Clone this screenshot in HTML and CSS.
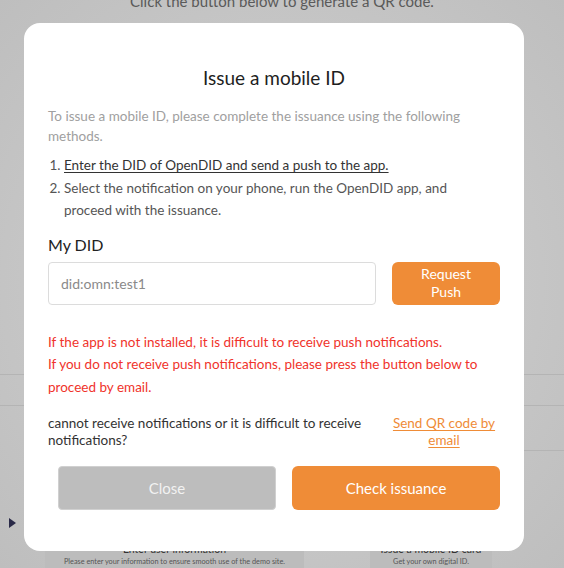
FILE: index.html
```html
<!DOCTYPE html>
<html lang="en">
<head>
<meta charset="utf-8">
<title>Issue a mobile ID</title>
<link rel="stylesheet" href="styles.css">
</head>
<body>
<div class="page">
  <p class="page-top">Click the button below to generate a QR code.</p>
  <div class="page-lines">
    <div class="line"></div>
    <div class="line"></div>
    <div class="line line-right"></div>
  </div>
  <div class="page-cards">
    <span class="arrow"></span>
    <div class="card card-a">
      <div class="card-title">Enter user information</div>
      <div class="card-sub">Please enter your information to ensure smooth use of the demo site.</div>
    </div>
    <div class="card card-b">
      <div class="card-title">Issue a mobile ID card</div>
      <div class="card-sub">Get your own digital ID.</div>
    </div>
  </div>
</div>

<div class="overlay">
  <div class="modal">
    <h2 class="modal-title">Issue a mobile ID</h2>
    <p class="intro">To issue a mobile ID, please complete the issuance using the following methods.</p>
    <ol class="steps">
      <li><u>Enter the DID of OpenDID and send a push to the app.</u></li>
      <li>Select the notification on your phone, run the OpenDID app, and proceed with the issuance.</li>
    </ol>
    <div class="label">My DID</div>
    <div class="did-row">
      <input class="did-input" type="text" value="did:omn:test1">
      <button class="btn-push">Request<br>Push</button>
    </div>
    <div class="warn">
      <p>If the app is not installed, it is difficult to receive push notifications.</p>
      <p>If you do not receive push notifications, please press the button below to proceed by email.</p>
    </div>
    <div class="alt-row">
      <p class="alt-text">cannot receive notifications or it is difficult to receive notifications?</p>
      <a class="alt-link" href="#">Send QR code by email</a>
    </div>
    <div class="actions">
      <button class="btn-close">Close</button>
      <button class="btn-check">Check issuance</button>
    </div>
  </div>
</div>
</body>
</html>
```

FILE: styles.css
```css
* { box-sizing: border-box; }
html, body { margin: 0; padding: 0; }
body {
  width: 564px;
  height: 568px;
  overflow: hidden;
  font-family: "Lato", "Noto Sans", sans-serif;
  position: relative;
  background: #c6c6c6;
}

/* underlying page (dimmed) */
.page {
  width: 564px;
  height: 568px;
  display: flex;
  flex-direction: column;
  background: radial-gradient(ellipse at center, #cacaca 0%, #c6c6c6 60%, #bebebe 100%);
}
.page-top {
  margin: -8px 0 0;
  text-align: center;
  font-size: 15px;
  line-height: 18px;
  color: #5a5a5a;
}
.page-lines { margin-top: 364px; }
.line { height: 31px; border-top: 1px solid #b4b4b4; }
.line-right { margin-left: 520px; height: 1px; margin-top: 14px; }
.page-cards {
  display: flex;
  margin-top: auto;
  height: 30px;
  position: relative;
}
.arrow {
  position: absolute;
  left: 9px;
  top: -20px;
  width: 0; height: 0;
  border-top: 5px solid transparent;
  border-bottom: 5px solid transparent;
  border-left: 7px solid #2a2a48;
}
.card {
  background: #bcbcbc;
  text-align: center;
  padding-top: 4px;
  height: 30px;
}
.card-a { margin-left: 45px; width: 259px; }
.card-b { margin-left: 66px; width: 122px; }
.card-title { font-size: 10.5px; line-height: 14px; color: #333; }
.card-sub { font-size: 7.3px; line-height: 12px; color: #555; white-space: nowrap; }

/* modal */
.overlay {
  position: absolute;
  inset: 0;
}
.modal {
  position: absolute;
  left: 24px;
  top: 23px;
  width: 500px;
  height: 528px;
  background: #fff;
  border-radius: 16px;
  padding: 42px 24px 0;
  color: #222;
}
.modal-title {
  margin: 0;
  text-align: center;
  font-size: 19px;
  font-weight: 400;
  line-height: 26px;
  color: #1e1e1e;
}
.intro {
  margin: 15px 0 0;
  font-size: 13.5px;
  line-height: 20px;
  color: #a0a0a0;
}
.steps {
  margin: 8px 0 0;
  padding-left: 16px;
  max-width: 430px;
  font-size: 13.5px;
  line-height: 22.5px;
  color: #555;
}
.steps u { color: #333; text-underline-offset: 2px; }
.label {
  margin-top: 12px;
  font-size: 16px;
  line-height: 22px;
  color: #222;
}
.did-row {
  display: flex;
  gap: 16px;
  margin-top: 6px;
}
.did-input {
  flex: 0 0 328px;
  height: 43px;
  border: 1px solid #dcdcdc;
  border-radius: 4px;
  padding: 0 12px;
  font-family: inherit;
  font-size: 14px;
  color: #8a8a8a;
  outline: none;
}
.btn-push {
  flex: 0 0 108px;
  height: 43px;
  border: none;
  border-radius: 6px;
  background: #ef8c37;
  color: #fff;
  font-family: inherit;
  font-size: 14px;
  line-height: 18px;
  padding: 0;
}
.warn {
  margin-top: 26px;
  color: #f0332b;
  font-size: 13.5px;
  line-height: 22.5px;
}
.warn p { margin: 0; }
.alt-row {
  display: flex;
  justify-content: space-between;
  align-items: flex-start;
  margin-top: 17px;
}
.alt-text {
  margin: 0;
  width: 330px;
  font-size: 13.5px;
  line-height: 17px;
  color: #333;
}
.alt-link {
  width: 112px;
  text-align: center;
  font-size: 13.5px;
  line-height: 17px;
  color: #ef8c37;
  text-underline-offset: 2px;
}
.actions {
  display: flex;
  gap: 16px;
  margin-top: 17px;
  padding-left: 10px;
}
.btn-close {
  width: 218px;
  height: 44px;
  border: 1px solid #d0d0d0;
  border-radius: 4px;
  background: #bdbdbd;
  color: #f2f2f2;
  font-family: inherit;
  font-size: 15px;
}
.btn-check {
  width: 208px;
  height: 44px;
  border: none;
  border-radius: 6px;
  background: #ef8c37;
  color: #fff;
  font-family: inherit;
  font-size: 15px;
}
```
